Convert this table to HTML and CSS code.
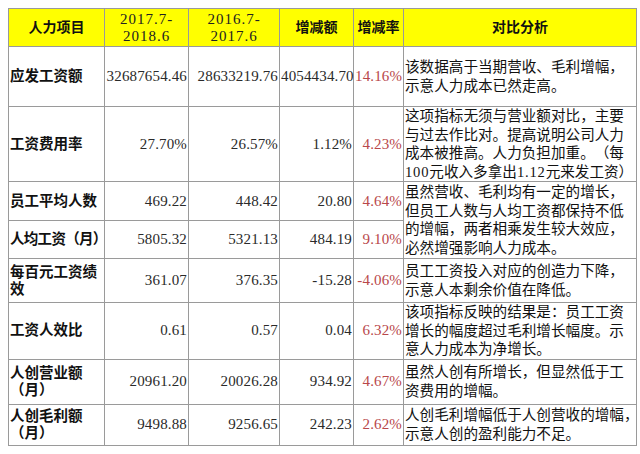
FILE: index.html
```html
<!DOCTYPE html>
<html lang="zh-CN">
<head>
<meta charset="utf-8">
<link rel="stylesheet" href="styles.css">
</head>
<body>
<table class="report">
  <colgroup>
    <col class="c-item"><col class="c-cur"><col class="c-prev"><col class="c-diff"><col class="c-rate"><col class="c-note">
  </colgroup>
  <thead>
    <tr class="h-head">
      <th>人力项目</th>
      <th><span class="date">2017.7-<br>2018.6</span></th>
      <th><span class="date">2016.7-<br>2017.6</span></th>
      <th>增减额</th>
      <th>增减率</th>
      <th>对比分析</th>
    </tr>
  </thead>
  <tbody>
    <tr class="h-1">
      <td class="item">应发工资额</td>
      <td class="num">32687654.46</td>
      <td class="num">28633219.76</td>
      <td class="num">4054434.70</td>
      <td class="num rate">14.16%</td>
      <td class="note">该数据高于当期营收、毛利增幅，<br>示意人力成本已然走高。</td>
    </tr>
    <tr class="h-2">
      <td class="item">工资费用率</td>
      <td class="num">27.70%</td>
      <td class="num">26.57%</td>
      <td class="num">1.12%</td>
      <td class="num rate">4.23%</td>
      <td class="note">这项指标无须与营业额对比，主要<br>与过去作比对。提高说明公司人力<br>成本被推高。人力负担加重。（每<br><span class="lat">100</span>元收入多拿出<span class="lat">1.12</span>元来发工资）</td>
    </tr>
    <tr class="h-3">
      <td class="item">员工平均人数</td>
      <td class="num">469.22</td>
      <td class="num">448.42</td>
      <td class="num">20.80</td>
      <td class="num rate">4.64%</td>
      <td class="note" rowspan="2">虽然营收、毛利均有一定的增长，<br>但员工人数与人均工资都保持不低<br>的增幅，两者相乘发生较大效应，<br>必然增强影响人力成本。</td>
    </tr>
    <tr class="h-4">
      <td class="item nowrap">人均工资（月）</td>
      <td class="num">5805.32</td>
      <td class="num">5321.13</td>
      <td class="num">484.19</td>
      <td class="num rate">9.10%</td>
    </tr>
    <tr class="h-5">
      <td class="item">每百元工资绩<br>效</td>
      <td class="num">361.07</td>
      <td class="num">376.35</td>
      <td class="num">-15.28</td>
      <td class="num rate">-4.06%</td>
      <td class="note">员工工资投入对应的创造力下降，<br>示意人本剩余价值在降低。</td>
    </tr>
    <tr class="h-6">
      <td class="item">工资人效比</td>
      <td class="num">0.61</td>
      <td class="num">0.57</td>
      <td class="num">0.04</td>
      <td class="num rate">6.32%</td>
      <td class="note">该项指标反映的结果是：员工工资<br>增长的幅度超过毛利增长幅度。示<br>意人力成本为净增长。</td>
    </tr>
    <tr class="h-7">
      <td class="item">人创营业额<br>（月）</td>
      <td class="num">20961.20</td>
      <td class="num">20026.28</td>
      <td class="num">934.92</td>
      <td class="num rate">4.67%</td>
      <td class="note">虽然人创有所增长，但显然低于工<br>资费用的增幅。</td>
    </tr>
    <tr class="h-8">
      <td class="item">人创毛利额<br>（月）</td>
      <td class="num">9498.88</td>
      <td class="num">9256.65</td>
      <td class="num">242.23</td>
      <td class="num rate">2.62%</td>
      <td class="note">人创毛利增幅低于人创营收的增幅，<br>示意人创的盈利能力不足。</td>
    </tr>
  </tbody>
</table>
</body>
</html>
```

FILE: styles.css
```css
html, body {
  background: #ffffff;
}
body {
  margin: 8px 0 0 8px;
  font-family: "Liberation Serif", "Noto Sans CJK SC", serif;
  color: #1a1a1a;
  text-spacing-trim: space-all;
}
.report {
  border-collapse: collapse;
  table-layout: fixed;
  width: 628px;
}
.c-item { width: 96px; }
.c-cur { width: 84px; }
.c-prev { width: 91px; }
.c-diff { width: 74px; }
.c-rate { width: 50px; }
.c-note { width: 233px; }

.report th,
.report td {
  border: 1px solid #9a9a9a;
  padding: 0 1px;
  vertical-align: middle;
  overflow: visible;
}
.report th {
  background: #ffff00;
  font-size: 14px;
  font-weight: bold;
  line-height: 16px;
  text-align: center;
  color: #111;
}
.date {
  font-weight: normal;
  font-size: 15px;
  letter-spacing: 1px;
  color: #222;
}
.item {
  font-size: 14.5px;
  font-weight: bold;
  line-height: 17px;
  text-align: left;
  color: #111;
}
.nowrap {
  white-space: nowrap;
  letter-spacing: -0.7px;
}
.num {
  font-size: 15px;
  text-align: right;
  color: #2a2a2a;
  white-space: nowrap;
  padding: 0;
  letter-spacing: 0.15px;
}
.rate {
  color: #b8474a;
}
.note {
  font-size: 14.6px;
  line-height: 18.5px;
  text-align: left;
  padding: 0 1px;
  white-space: nowrap;
  color: #111;
}
.lat {
  letter-spacing: 0.8px;
}

.h-head { height: 38px; }
.h-1 { height: 60px; }
.h-2 { height: 75px; }
.h-3 { height: 39px; }
.h-4 { height: 38px; }
.h-5 { height: 44px; }
.h-6 { height: 56px; }
.h-7 { height: 45px; }
.h-8 { height: 41px; }
```
